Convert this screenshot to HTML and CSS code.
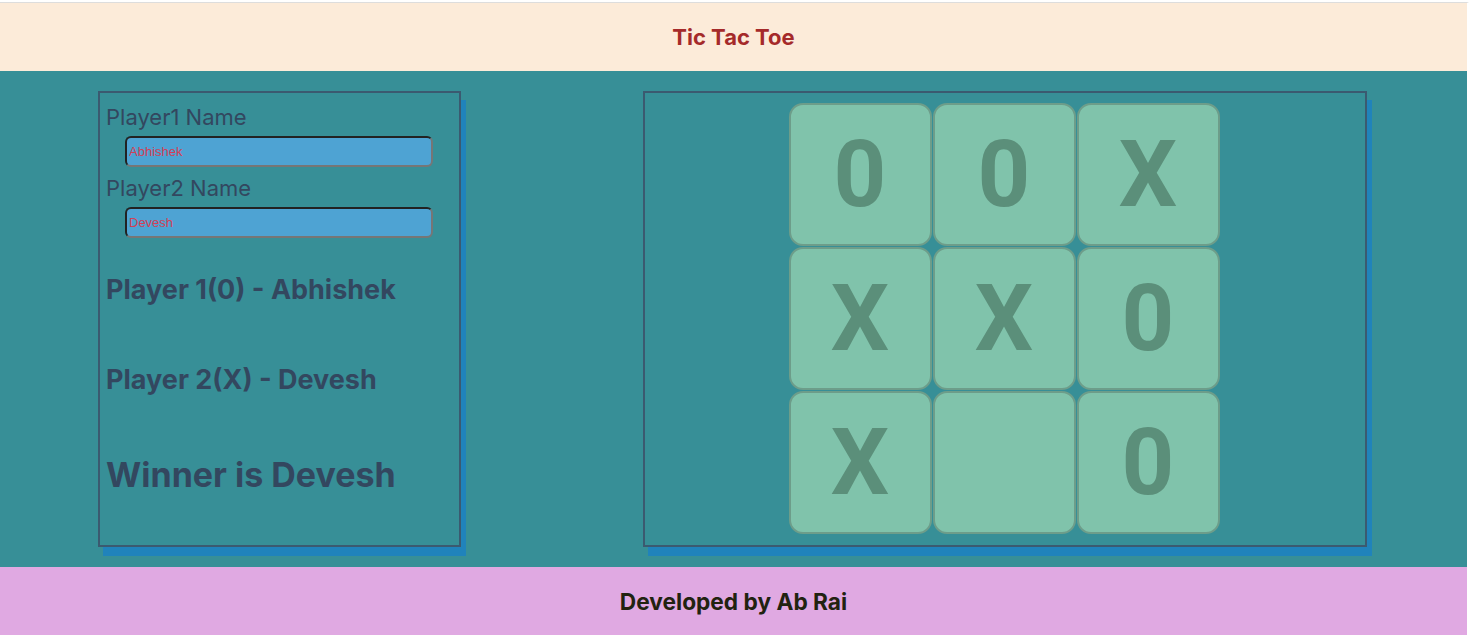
FILE: index.html
```html
<!DOCTYPE html>
<html lang="en">
<head>
<meta charset="utf-8">
<title>Tic Tac Toe</title>
<link rel="stylesheet" href="styles.css">
</head>
<body>
<div class="page">
  <header class="header">
    <h1 class="title">Tic Tac Toe</h1>
  </header>
  <main class="main">
    <section class="players">
      <label class="field-label" for="p1">Player1 Name</label>
      <input class="name-input" id="p1" type="text" value="Abhishek">
      <label class="field-label" for="p2">Player2 Name</label>
      <input class="name-input" id="p2" type="text" value="Devesh">
      <h2 class="player-line first">Player 1(0) - Abhishek</h2>
      <h2 class="player-line second">Player 2(X) - Devesh</h2>
      <h2 class="winner">Winner is Devesh</h2>
    </section>
    <section class="board-panel">
      <div class="board">
        <div class="cell">0</div>
        <div class="cell">0</div>
        <div class="cell">X</div>
        <div class="cell">X</div>
        <div class="cell">X</div>
        <div class="cell">0</div>
        <div class="cell">X</div>
        <div class="cell"></div>
        <div class="cell">0</div>
      </div>
    </section>
  </main>
  <footer class="footer">
    <p class="credit">Developed by Ab Rai</p>
  </footer>
</div>
</body>
</html>
```
FILE: styles.css
```css
html, body {
  margin: 0;
  padding: 0;
  background: #ffffff;
}

body {
  padding-top: 2px;
  font-family: Inter, "Noto Sans", sans-serif;
}

.page {
  width: 1467px;
  border-top: 1px solid #dddddd;
  border-right: 2px solid #ffffff;
  box-shadow: 1px 0 0 #2b2b2b;
}

.header {
  height: 68px;
  background: #fcebd9;
  display: flex;
  align-items: center;
  justify-content: center;
}

.title {
  margin: 0;
  font-size: 22px;
  font-weight: 700;
  color: #a52a2a;
}

.main {
  background: #378f97;
  height: 496px;
  box-sizing: border-box;
  padding: 20px 100px 20px 98px;
  display: flex;
  justify-content: space-between;
  align-items: stretch;
}

.players {
  width: 363px;
  box-sizing: border-box;
  border: 2px solid #3b5a70;
  box-shadow: 5px 9px 0 #2083bb;
  padding: 12px 6px 0 6px;
  display: flex;
  flex-direction: column;
  align-items: flex-start;
  color: #33475f;
}

.field-label {
  font-size: 22px;
  line-height: 25px;
}

.name-input {
  margin: 6px 0 9px 19px;
  width: 308px;
  height: 31px;
  box-sizing: border-box;
  border: 2px solid #767676;
  border-top-color: #222222;
  border-left-color: #222222;
  border-radius: 6px;
  background: #4ea3d3;
  color: #d23f56;
  font-family: "Liberation Sans", Arial, sans-serif;
  font-size: 13px;
  padding: 0 2px;
}

.player-line, .winner {
  margin: 0;
  font-weight: 700;
  color: #33475f;
}

.player-line {
  font-size: 27px;
  line-height: 32px;
}

.player-line.first {
  margin-top: 27px;
}

.player-line.second {
  margin-top: 58px;
}

.winner {
  margin-top: 59px;
  font-size: 34px;
  line-height: 40px;
}

.board-panel {
  width: 724px;
  box-sizing: border-box;
  border: 2px solid #3b5a70;
  box-shadow: 5px 9px 0 #2083bb;
  padding: 10px 0 11px;
  display: flex;
  justify-content: center;
}

.board {
  display: grid;
  grid-template-columns: repeat(3, 143px);
  grid-template-rows: repeat(3, 143px);
  gap: 1px;
  transform: translateX(-1px);
}

.cell {
  box-sizing: border-box;
  border: 2px solid #6d9d8a;
  border-radius: 14px;
  background: #80c3ab;
  color: #5b8f7a;
  font-family: Roboto, Inter, sans-serif;
  font-size: 92px;
  font-weight: 700;
  display: flex;
  align-items: center;
  justify-content: center;
  line-height: 1;
}

.footer {
  height: 68px;
  background: #e0a9e2;
  display: flex;
  align-items: center;
  justify-content: center;
}

.credit {
  margin: 0;
  font-size: 22.7px;
  font-weight: 700;
  color: #222210;
}
```
